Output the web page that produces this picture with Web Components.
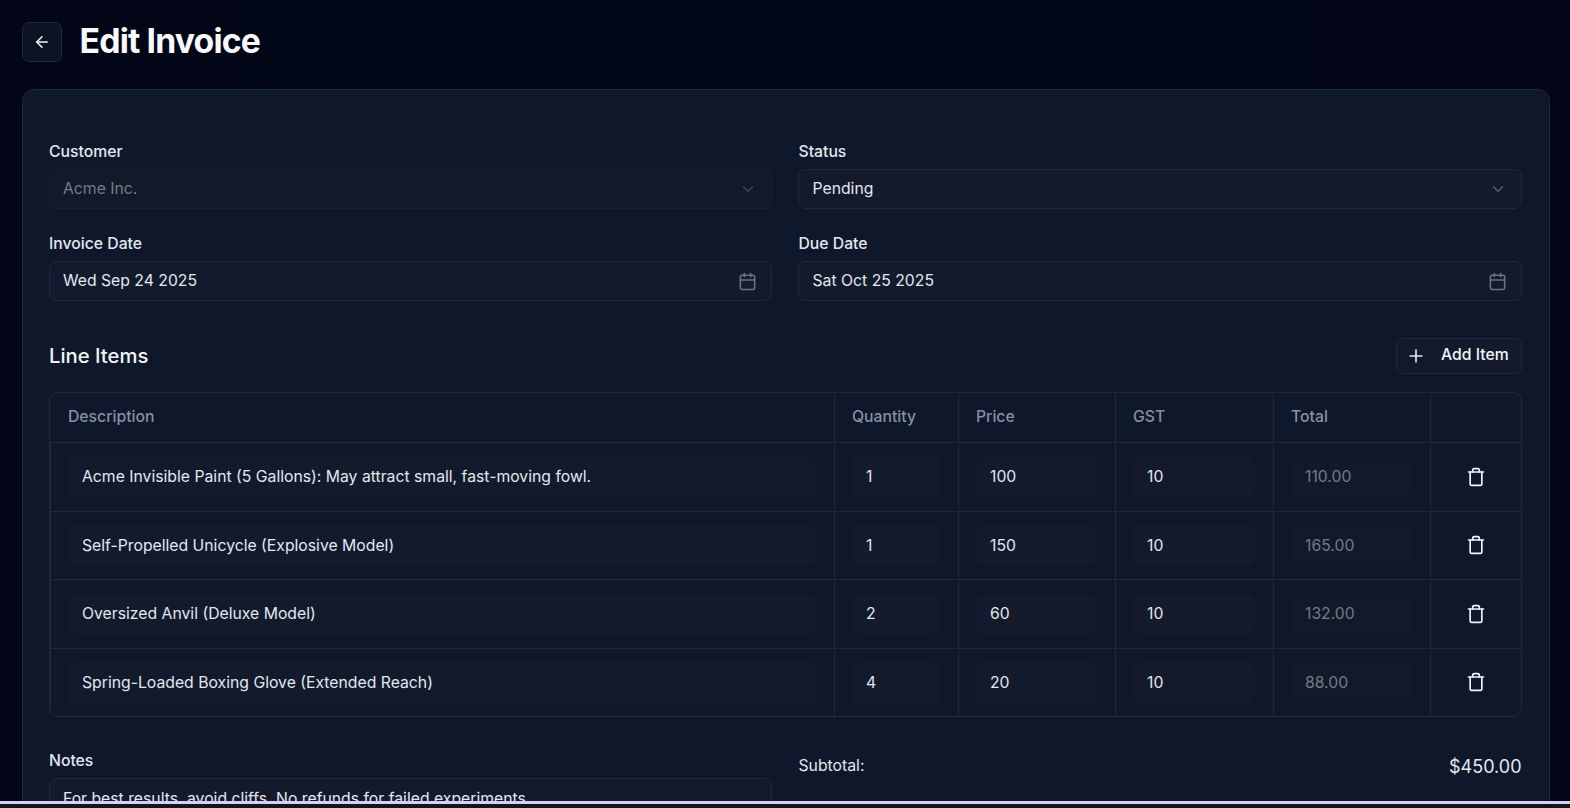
<!DOCTYPE html>
<html lang="en">
<head>
<meta charset="utf-8">
<title>Edit Invoice</title>
<style>
    html, body { margin: 0; height: 100%; overflow: hidden; background: #020617; }
    body { font-family: Inter, "Liberation Sans", sans-serif; color: #e2e8f0; }
</style>
</head>
<body>
<invoice-page></invoice-page>

<script>
const icons = {
    back: '<path d="m12 19-7-7 7-7"/><path d="M19 12H5"/>',
    chevron: '<path d="m6 9 6 6 6-6"/>',
    calendar: '<path d="M8 2v4"/><path d="M16 2v4"/><rect width="18" height="18" x="3" y="4" rx="2"/><path d="M3 10h18"/>',
    plus: '<path d="M5 12h14"/><path d="M12 5v14"/>',
    trash: '<path d="M3 6h18"/><path d="M19 6v14a2 2 0 0 1-2 2H7a2 2 0 0 1-2-2V6"/><path d="M8 6V4a2 2 0 0 1 2-2h4a2 2 0 0 1 2 2v2"/>'
};

class UiIcon extends HTMLElement {
    connectedCallback() {
        const size = this.getAttribute('size') || 18;
        const root = this.attachShadow({ mode: 'open' });
        root.innerHTML = `
        <style>
            :host { display: inline-flex; flex: none; }
            svg { display: block; fill: none; stroke: currentColor; stroke-width: 2; stroke-linecap: round; stroke-linejoin: round; }
        </style>
        <svg width="${size}" height="${size}" viewBox="0 0 24 24">${icons[this.getAttribute('name')]}</svg>`;
    }
}
customElements.define('ui-icon', UiIcon);

const fieldTemplate = document.createElement('template');
fieldTemplate.innerHTML = `
<style>
    :host { display: block; }
    label { display: block; font-size: 15.75px; font-weight: 500; line-height: 18px; color: #e2e8f0; margin-bottom: 8px; }
    .box {
        display: flex;
        align-items: center;
        justify-content: space-between;
        box-sizing: border-box;
        height: 40px;
        padding: 0 14px 0 13px;
        border: 1px solid #1e293b;
        border-radius: 7px;
        background: #131a2c;
        font-size: 15.75px;
        color: #e2e8f0;
    }
    .value { padding-bottom: 1px; }
    :host([disabled]) .box { color: #747b89; border-color: #182133; background: #121929; }
    :host([disabled]) .icon { color: #3c4656; }
    :host([multiline]) .box { align-items: flex-start; padding-top: 10px; height: 80px; }
    .icon { display: flex; color: #6a7383; }
    :host([icon="chevron"]:not([disabled])) .icon { color: #566073; }
</style>
<label></label>
<div class="box"><span class="value"><slot></slot></span><span class="icon"></span></div>
`;

class FormField extends HTMLElement {
    connectedCallback() {
        const root = this.attachShadow({ mode: 'open' });
        root.appendChild(fieldTemplate.content.cloneNode(true));
        root.querySelector('label').textContent = this.getAttribute('label');
        const name = this.getAttribute('icon');
        if (name) {
            const icon = document.createElement('ui-icon');
            icon.setAttribute('name', name);
            icon.setAttribute('size', name === 'calendar' ? 19 : 18);
            root.querySelector('.icon').appendChild(icon);
        }
    }
}
customElements.define('form-field', FormField);

const cellTemplate = document.createElement('template');
cellTemplate.innerHTML = `
<style>
    :host { display: flex; align-items: center; box-sizing: border-box; padding: 0 18px 0 17px; border-left: 1px solid #1e293b; }
    :host(:first-child) { border-left: 0; padding-left: 18px; }
    .input {
        display: flex;
        align-items: center;
        box-sizing: border-box;
        width: 100%;
        height: 40.5px;
        padding: 0 13px 0 14px;
        border-radius: 7px;
        background: #131a2c;
        font-size: 15.75px;
        color: #e2e8f0;
    }
    :host(:first-child) .input { padding-left: 12px; }
    :host([muted]) .input { color: #747b89; background: #121929; }
</style>
<div class="input"><slot></slot></div>
`;

class ItemCell extends HTMLElement {
    connectedCallback() {
        this.attachShadow({ mode: 'open' }).appendChild(cellTemplate.content.cloneNode(true));
    }
}
customElements.define('item-cell', ItemCell);

const rowTemplate = document.createElement('template');
rowTemplate.innerHTML = `
<style>
    :host {
        display: grid;
        grid-template-columns: 784px 124px 157px 158px 157px 1fr;
        height: 68.5px;
        box-sizing: border-box;
        border-top: 1px solid #1e293b;
    }
    .action { display: flex; align-items: center; justify-content: center; border-left: 1px solid #1e293b; color: #f1f5f9; }
</style>
<item-cell class="d"></item-cell><item-cell class="q"></item-cell><item-cell class="p"></item-cell><item-cell class="g"></item-cell><item-cell class="t" muted></item-cell>
<div class="action"><ui-icon name="trash" size="20"></ui-icon></div>
`;

class LineRow extends HTMLElement {
    connectedCallback() {
        const root = this.attachShadow({ mode: 'open' });
        root.appendChild(rowTemplate.content.cloneNode(true));
        for (const key of ['d', 'q', 'p', 'g', 't']) {
            root.querySelector('.' + key).textContent = this.getAttribute(key);
        }
    }
}
customElements.define('line-row', LineRow);

const itemsTemplate = document.createElement('template');
itemsTemplate.innerHTML = `
<style>
    :host { display: block; }
    .bar { display: flex; align-items: center; justify-content: space-between; margin-bottom: 18px; }
    h2 { margin: 0 0 2px; font-size: 20.25px; font-weight: 500; color: #f1f5f9; }
    button {
        display: flex;
        align-items: center;
        gap: 15px;
        box-sizing: border-box;
        width: 126px;
        height: 36px;
        padding: 0 0 0 9.5px;
        border: 1px solid #1e293b;
        border-radius: 7px;
        background: #131a2c;
        color: #f1f5f9;
        font: 500 15.75px Inter, "Liberation Sans", sans-serif;
    }
    button span { padding-bottom: 3px; }
    button ui-icon { color: #e2e8f0; }
    .table { border: 1px solid #1e293b; border-radius: 9px; overflow: hidden; }
    .head {
        display: grid;
        grid-template-columns: 784px 124px 157px 158px 157px 1fr;
        height: 49px;
    }
    .head div { display: flex; align-items: center; box-sizing: border-box; padding: 0 18px 2px 17px; border-left: 1px solid #1e293b; font-size: 15.75px; font-weight: 500; color: #8691a3; }
    .head div:first-child { border-left: 0; padding-left: 18px; }
</style>
<div class="bar">
    <h2>Line Items</h2>
    <button><ui-icon name="plus" size="20"></ui-icon><span>Add Item</span></button>
</div>
<div class="table">
    <div class="head"><div>Description</div><div>Quantity</div><div>Price</div><div>GST</div><div>Total</div><div></div></div>
    <slot></slot>
</div>
`;

class LineItems extends HTMLElement {
    connectedCallback() {
        this.attachShadow({ mode: 'open' }).appendChild(itemsTemplate.content.cloneNode(true));
    }
}
customElements.define('line-items', LineItems);

const pageTemplate = document.createElement('template');
pageTemplate.innerHTML = `
<style>
    :host { display: flex; flex-direction: column; height: 100vh; overflow: hidden; }
    main { flex: 1; min-height: 0; overflow: hidden; box-sizing: border-box; padding: 22px 20px 0 21.6px; background: radial-gradient(ellipse at 50% 0, #000717, #020617 70%); }
    header { display: flex; align-items: center; gap: 18px; height: 40px; margin-bottom: 27px; }
    .back {
        display: flex;
        align-items: center;
        justify-content: center;
        box-sizing: border-box;
        width: 40px;
        height: 40px;
        border: 1px solid #1e293b;
        border-radius: 7px;
        background: #0c1322;
        color: #f1f5f9;
    }
    h1 { margin: 0 0 4px; font-size: 33.75px; font-weight: 700; letter-spacing: -0.85px; color: #f8fafc; }
    .card {
        box-sizing: border-box;
        height: 800px;
        padding: 53px 27.5px 27px 26.4px;
        border: 1px solid #1e293b;
        border-radius: 12px;
        background: #0f172a;
    }
    .grid { display: grid; grid-template-columns: 1fr 1fr; column-gap: 26.5px; row-gap: 26px; }
    line-items { margin: 37px 0 34.5px; }
    .subtotal { display: flex; align-items: flex-start; justify-content: space-between; padding: 4px 0 0; font-size: 15.75px; }
    .subtotal b { font-size: 18px; font-weight: 400; color: #e2e8f0; }
    .strip { flex: none; height: 7px; box-sizing: border-box; border-top: 3px solid #ccd5f8; background: #18141f; }
</style>
<main>
    <header>
        <div class="back"><ui-icon name="back" size="18"></ui-icon></div>
        <h1>Edit Invoice</h1>
    </header>
    <div class="card">
        <div class="grid">
            <form-field label="Customer" icon="chevron" disabled>Acme Inc.</form-field>
            <form-field label="Status" icon="chevron">Pending</form-field>
            <form-field label="Invoice Date" icon="calendar">Wed Sep 24 2025</form-field>
            <form-field label="Due Date" icon="calendar">Sat Oct 25 2025</form-field>
        </div>
        <line-items>
            <line-row d="Acme Invisible Paint (5 Gallons): May attract small, fast-moving fowl." q="1" p="100" g="10" t="110.00"></line-row>
            <line-row d="Self-Propelled Unicycle (Explosive Model)" q="1" p="150" g="10" t="165.00"></line-row>
            <line-row d="Oversized Anvil (Deluxe Model)" q="2" p="60" g="10" t="132.00"></line-row>
            <line-row d="Spring-Loaded Boxing Glove (Extended Reach)" q="4" p="20" g="10" t="88.00"></line-row>
        </line-items>
        <div class="grid">
            <form-field label="Notes" multiline>For best results, avoid cliffs. No refunds for failed experiments.</form-field>
            <div class="subtotal"><span>Subtotal:</span><b>$450.00</b></div>
        </div>
    </div>
</main>
<div class="strip"></div>
`;

class InvoicePage extends HTMLElement {
    connectedCallback() {
        this.attachShadow({ mode: 'open' }).appendChild(pageTemplate.content.cloneNode(true));
    }
}
customElements.define('invoice-page', InvoicePage);
</script>
</body>
</html>
